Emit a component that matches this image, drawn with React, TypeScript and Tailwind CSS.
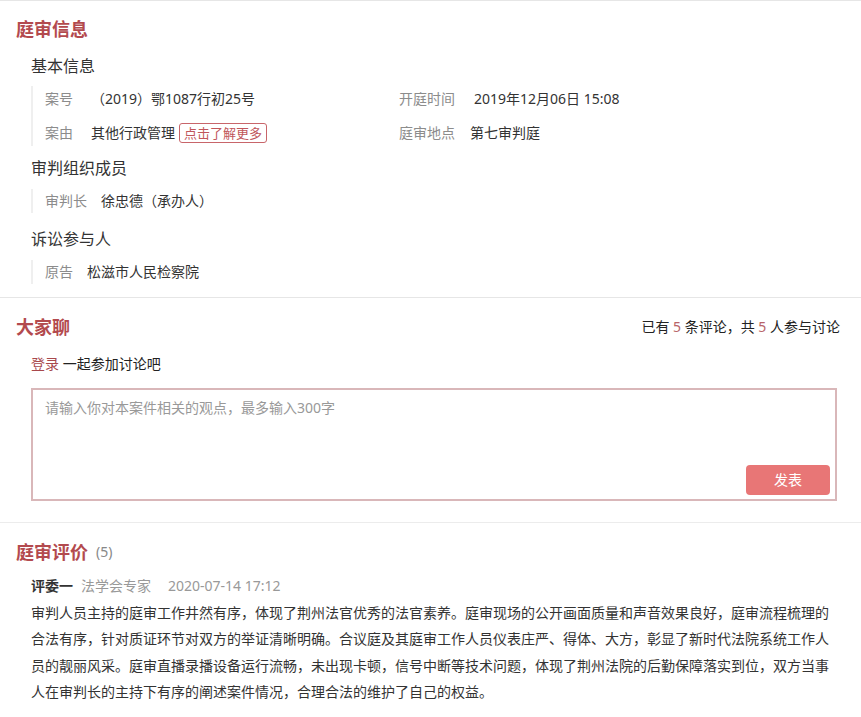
import React from "react";

const font = "font-['Noto_Sans','Noto_Sans_CJK_SC',sans-serif]";

function Field({
  label,
  children,
  labelWidth = "w-[46px]",
}: {
  label: string;
  children: React.ReactNode;
  labelWidth?: string;
}) {
  return (
    <div className="flex h-6 items-center text-sm">
      <span className={`${labelWidth} shrink-0 text-[#8c8c8c]`}>{label}</span>
      <span className="flex items-center text-[#333]">{children}</span>
    </div>
  );
}

function SubTitle({ children }: { children: React.ReactNode }) {
  return <h4 className="h-6 text-base leading-6 text-[#333]">{children}</h4>;
}

export default function App() {
  return (
    <div className={`${font} min-h-screen w-[861px] bg-white`}>
      {/* 庭审信息 */}
      <section className="border-y border-[#e6e6e6] px-4 pb-[13px] pt-4">
        <h3 className="h-6 text-lg font-bold leading-6 text-[#b34a4e]">庭审信息</h3>
        <div className="mt-[13px] pl-[15px]">
          <SubTitle>基本信息</SubTitle>
          <div className="mt-2 flex border-l-2 border-[#efefef] py-[1px] pl-3">
            <div className="flex w-[354px] flex-col gap-2.5">
              <Field label="案号">（2019）鄂1087行初25号</Field>
              <Field label="案由">
                其他行政管理
                <span className="ml-1 rounded-[3px] border border-[#c8656a] px-1 text-[13px] leading-[18px] text-[#c0565b]">
                  点击了解更多
                </span>
              </Field>
            </div>
            <div className="flex flex-col gap-2.5">
              <Field label="开庭时间" labelWidth="w-[75px]">
                2019年12月06日 15:08
              </Field>
              <Field label="庭审地点" labelWidth="w-[71px]">
                第七审判庭
              </Field>
            </div>
          </div>

          <div className="mt-[10px]">
            <SubTitle>审判组织成员</SubTitle>
          </div>
          <div className="mt-[9px] border-l-2 border-[#efefef] pl-3">
            <Field label="审判长" labelWidth="w-[56px]">
              徐忠德（承办人）
            </Field>
          </div>

          <div className="mt-[14px]">
            <SubTitle>诉讼参与人</SubTitle>
          </div>
          <div className="mt-[9px] border-l-2 border-[#efefef] pl-3">
            <Field label="原告" labelWidth="w-[42px]">
              松滋市人民检察院
            </Field>
          </div>
        </div>
      </section>

      {/* 大家聊 */}
      <section className="border-b border-[#ececec] px-4 pb-[21px] pt-[17px]">
        <div className="flex h-6 items-center justify-between">
          <h3 className="text-lg font-bold leading-6 text-[#b34a4e]">大家聊</h3>
          <p className="pr-[5px] text-sm text-[#222]">
            已有 <span className="text-[#b86468]">5</span> 条评论，共{" "}
            <span className="text-[#b86468]">5</span> 人参与讨论
          </p>
        </div>
        <p className="mt-[13px] pl-[15px] text-sm leading-6 text-[#222]">
          <span className="text-[#a8484c]">登录</span> 一起参加讨论吧
        </p>
        <div className="ml-[15px] mr-[8px] mt-[12px] flex h-[113px] flex-col justify-between border-2 border-[#d9b7b9] bg-white pb-1 pl-3 pr-[5px] pt-2">
          <p className="text-sm leading-5 text-[#999]">
            请输入你对本案件相关的观点，最多输入300字
          </p>
          <div className="flex justify-end">
            <button className="h-[30px] w-[84px] rounded-[4px] bg-[#e87676] text-sm text-white">
              发表
            </button>
          </div>
        </div>
      </section>

      {/* 庭审评价 */}
      <section className="px-4 pt-[17px]">
        <div className="flex h-6 items-center gap-2">
          <h3 className="text-lg font-bold leading-6 text-[#b34a4e]">庭审评价</h3>
          <span className="text-sm text-[#888]">(5)</span>
        </div>
        <div className="ml-[15px] mr-[12px] mt-[10px] border-b border-[#e6e6e6] pb-[12px]">
          <div className="flex h-6 items-center text-sm">
            <span className="font-bold text-[#333]">评委一</span>
            <span className="ml-2 text-[#999]">法学会专家</span>
            <span className="ml-[17px] text-[#999]">2020-07-14 17:12</span>
          </div>
          <p className="mt-[1.5px] text-sm leading-[26.5px] text-[#333]">
            审判人员主持的庭审工作井然有序，体现了荆州法官优秀的法官素养。庭审现场的公开画面质量和声音效果良好，庭审流程梳理的
            <br />
            合法有序，针对质证环节对双方的举证清晰明确。合议庭及其庭审工作人员仪表庄严、得体、大方，彰显了新时代法院系统工作人
            <br />
            员的靓丽风采。庭审直播录播设备运行流畅，未出现卡顿，信号中断等技术问题，体现了荆州法院的后勤保障落实到位，双方当事
            <br />
            人在审判长的主持下有序的阐述案件情况，合理合法的维护了自己的权益。
          </p>
        </div>
      </section>
    </div>
  );
}
